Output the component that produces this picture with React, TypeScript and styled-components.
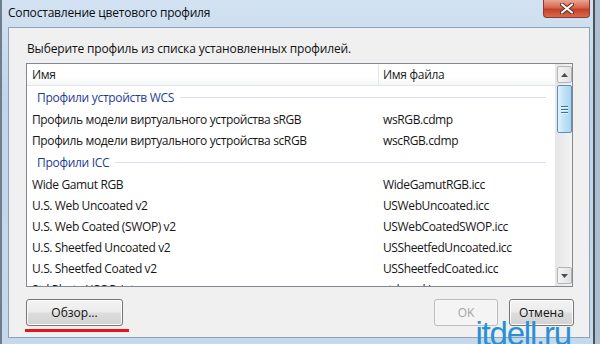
import styled, { createGlobalStyle } from "styled-components";

const GlobalStyle = createGlobalStyle`
  html, body {
    margin: 0;
    padding: 0;
  }
  body {
    width: 600px;
    height: 344px;
    overflow: hidden;
    background: #c4d7eb;
    font-family: "Open Sans", "Noto Sans", sans-serif;
  }
`;

type Group = {
  title: string;
  rows: [string, string][];
};

const groups: Group[] = [
  {
    title: "Профили устройств WCS",
    rows: [
      ["Профиль модели виртуального устройства sRGB", "wsRGB.cdmp"],
      ["Профиль модели виртуального устройства scRGB", "wscRGB.cdmp"],
    ],
  },
  {
    title: "Профили ICC",
    rows: [
      ["Wide Gamut RGB", "WideGamutRGB.icc"],
      ["U.S. Web Uncoated v2", "USWebUncoated.icc"],
      ["U.S. Web Coated (SWOP) v2", "USWebCoatedSWOP.icc"],
      ["U.S. Sheetfed Uncoated v2", "USSheetfedUncoated.icc"],
      ["U.S. Sheetfed Coated v2", "USSheetfedCoated.icc"],
      ["Std Photo YCC Print", "stdpyccl.icc"],
    ],
  },
];

const CloseIcon = () => (
  <svg width="14" height="11" viewBox="0 0 14 11">
    <path d="M2 1.5 L12 9.5 M12 1.5 L2 9.5" stroke="#5a2a22" strokeWidth="4" strokeLinecap="round" />
    <path d="M2 1.5 L12 9.5 M12 1.5 L2 9.5" stroke="#ffffff" strokeWidth="2.2" strokeLinecap="round" />
  </svg>
);

const Arrow = ({ up }: { up?: boolean }) => (
  <svg width="7" height="4" viewBox="0 0 7 4">
    <path d={up ? "M0 4 L3.5 0 L7 4 Z" : "M0 0 L3.5 4 L7 0 Z"} fill="#4d4d4d" />
  </svg>
);

const App = () => {
  return (
    <>
      <GlobalStyle />
      <Window>
        <TitleBar>
          <Title>Сопоставление цветового профиля</Title>
          <CloseButton>
            <CloseIcon />
          </CloseButton>
        </TitleBar>
        <Client>
          <Prompt>Выберите профиль из списка установленных профилей.</Prompt>
          <ListBox>
            <ListBody>
              <Header>
                <HeaderCell>Имя</HeaderCell>
                <HeaderCell $divider>Имя файла</HeaderCell>
              </Header>
              {groups.map((g) => (
                <div key={g.title}>
                  <GroupRow>
                    <GroupTitle>{g.title}</GroupTitle>
                    <GroupLine />
                  </GroupRow>
                  {g.rows.map(([name, file]) => (
                    <Row key={name}>
                      <Cell>{name}</Cell>
                      <Cell>{file}</Cell>
                    </Row>
                  ))}
                </div>
              ))}
            </ListBody>
            <ScrollBar>
              <ScrollButton>
                <Arrow up />
              </ScrollButton>
              <Thumb>
                <Grip />
                <Grip />
                <Grip />
              </Thumb>
              <ScrollTrack />
              <ScrollButton>
                <Arrow />
              </ScrollButton>
            </ScrollBar>
          </ListBox>
          <ButtonRow>
            <Marked>
              <Button $width={97}>Обзор...</Button>
            </Marked>
            <Button $width={64} $disabled>
              OK
            </Button>
            <Button $width={65}>Отмена</Button>
          </ButtonRow>
        </Client>
        <Watermark>itdell.ru</Watermark>
      </Window>
    </>
  );
};

export default App;

const Window = styled.div`
  display: flex;
  flex-direction: column;
  position: relative;

  width: 600px;
  height: 344px;
  box-sizing: border-box;
  overflow: hidden;

  border-left: 2px solid #6f7d8c;
  background:
    linear-gradient(
      to right,
      transparent 591px,
      #4a525c 591px,
      #4a525c 593px,
      #aebfd2 593px
    ),
    linear-gradient(to bottom, #d2e2f2 0%, #c0d5ea 30%, #c6d9ec 100%);
`;

const TitleBar = styled.div`
  display: flex;
  align-items: flex-start;

  height: 27px;
  padding: 0 10px 0 6px;
`;

const Title = styled.span`
  padding-top: 5px;

  font-size: 12px;
  line-height: 16px;
  color: #0c0c0c;
  letter-spacing: -0.2px;
`;

const CloseButton = styled.div`
  display: flex;
  justify-content: center;
  align-items: center;

  width: 47px;
  height: 18px;
  margin-left: auto;
  box-sizing: border-box;

  border: 1px solid #8b3b2d;
  border-top: none;
  border-radius: 0 0 4px 4px;
  background: linear-gradient(to bottom, #e9a592 0%, #d8654b 45%, #c4412a 55%, #d86a4c 100%);
`;

const Client = styled.div`
  display: flex;
  flex-direction: column;
  flex: 1;

  margin: 0 10px 6px 6px;
  padding: 13px 15px 0 17px;

  border: 1px solid #8ea3ba;
  background: #f0f0f0;
`;

const Prompt = styled.div`
  padding-left: 1px;

  font-size: 12px;
  line-height: 16px;
  color: #111;
  letter-spacing: -0.15px;
`;

const ListBox = styled.div`
  display: flex;

  width: 547px;
  height: 224px;
  margin-top: 6px;
  box-sizing: border-box;
  overflow: hidden;

  border: 1px solid #828790;
  background: #ffffff;
`;

const ListBody = styled.div`
  display: flex;
  flex-direction: column;
  flex: 1;
  overflow: hidden;
`;

const Header = styled.div`
  display: grid;
  grid-template-columns: 351px 1fr;
  flex-shrink: 0;

  height: 21px;

  border-bottom: 1px solid #e3e6ea;
  background: linear-gradient(to bottom, #ffffff 0%, #ffffff 60%, #f5f6f7 100%);
`;

const HeaderCell = styled.div<{ $divider?: boolean }>`
  display: flex;
  align-items: center;

  padding-left: ${({ $divider }) => ($divider ? "4px" : "5px")};

  border-left: ${({ $divider }) => ($divider ? "1px solid #e3e6ea" : "none")};

  font-size: 12px;
  color: #1a1a1a;
  letter-spacing: -0.3px;
`;

const GroupRow = styled.div`
  display: flex;
  align-items: center;

  height: 23px;
  padding: 0 9px 0 10px;
`;

const GroupTitle = styled.span`
  font-size: 12px;
  color: #1e3c94;
  white-space: nowrap;
  letter-spacing: -0.3px;
`;

const GroupLine = styled.div`
  flex: 1;

  height: 1px;
  margin-left: 6px;

  background: #d9e0e8;
`;

const Row = styled.div`
  display: grid;
  grid-template-columns: 351px 1fr;
  align-items: center;

  height: 21px;
`;

const Cell = styled.div`
  padding-left: 5px;

  font-size: 12px;
  color: #161616;
  white-space: nowrap;
  letter-spacing: -0.38px;
`;

const ScrollBar = styled.div`
  display: flex;
  flex-direction: column;
  align-items: center;

  width: 17px;
  padding: 2px 0;
  box-sizing: border-box;

  border-left: 1px solid #e6e6e6;
  background: linear-gradient(to right, #e6e6e6, #f3f3f3);
`;

const ScrollButton = styled.div`
  display: flex;
  justify-content: center;
  align-items: center;

  width: 15px;
  height: 17px;
  box-sizing: border-box;

  border: 1px solid #b5b5b5;
  border-radius: 2px;
  background: linear-gradient(to right, #f4f4f4, #e2e2e2);
`;

const Thumb = styled.div`
  display: flex;
  flex-direction: column;
  justify-content: center;
  align-items: center;
  gap: 2px;

  width: 15px;
  height: 48px;
  margin-top: 2px;
  box-sizing: border-box;

  border: 1px solid #5f8fb4;
  border-radius: 2px;
  background: linear-gradient(to right, #e3f2fc, #bfe1f7 50%, #a9d5f2);
`;

const Grip = styled.div`
  width: 7px;
  height: 1px;

  background: #3e6f96;
  box-shadow: 0 1px 0 #e9f5fd;
`;

const ScrollTrack = styled.div`
  flex: 1;
`;

const ButtonRow = styled.div`
  display: flex;
  align-items: flex-start;
  gap: 11px;

  margin-top: 12px;
`;

const Marked = styled.div`
  position: relative;
  margin-right: auto;

  &::after {
    content: "";
    position: absolute;
    left: -1px;
    top: 30px;

    width: 104px;
    height: 3px;

    background: #e3161c;
  }
`;

const Button = styled.div<{ $width: number; $disabled?: boolean }>`
  display: flex;
  justify-content: center;
  align-items: center;

  width: ${({ $width }) => $width}px;
  height: 27px;
  box-sizing: border-box;

  border: 1px solid ${({ $disabled }) => ($disabled ? "#b9bdc0" : "#767676")};
  border-radius: 3px;
  background: ${({ $disabled }) =>
    $disabled
      ? "#f4f4f4"
      : "linear-gradient(to bottom, #f4f4f4 0%, #ebebeb 48%, #dddddd 52%, #d2d2d2 100%)"};
  box-shadow: inset 0 0 0 1px ${({ $disabled }) => ($disabled ? "#f7f7f7" : "#fbfbfb")};

  font-size: 12px;
  color: ${({ $disabled }) => ($disabled ? "#a3a3a3" : "#111")};
`;

const Watermark = styled.div`
  position: absolute;
  right: 29px;
  bottom: -9px;

  font-family: "Liberation Sans", Arial, sans-serif;
  font-size: 33px;
  letter-spacing: -1.2px;
  color: #2a90d6;
`;
